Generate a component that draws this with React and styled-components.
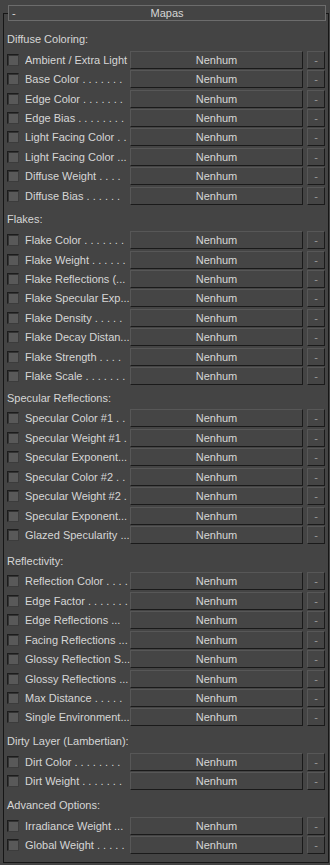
import React from 'react';
import styled, { createGlobalStyle } from 'styled-components';

const sections = [
  {
    title: 'Diffuse Coloring:',
    rows: [
      'Ambient / Extra Light',
      'Base Color . . . . . . .',
      'Edge Color . . . . . . .',
      'Edge Bias . . . . . . . .',
      'Light Facing Color . .',
      'Light Facing Color ...',
      'Diffuse Weight . . . .',
      'Diffuse Bias . . . . . .',
    ],
  },
  {
    title: 'Flakes:',
    rows: [
      'Flake Color . . . . . . .',
      'Flake Weight . . . . . .',
      'Flake Reflections (...',
      'Flake Specular Exp...',
      'Flake Density . . . . .',
      'Flake Decay Distan...',
      'Flake Strength . . . .',
      'Flake Scale . . . . . . .',
    ],
  },
  {
    title: 'Specular Reflections:',
    space: -2,
    rows: [
      'Specular Color #1 . .',
      'Specular Weight #1 .',
      'Specular Exponent...',
      'Specular Color #2 . .',
      'Specular Weight #2 .',
      'Specular Exponent...',
      'Glazed Specularity ...',
    ],
  },
  {
    title: 'Reflectivity:',
    space: 2,
    rows: [
      'Reflection Color . . . .',
      'Edge Factor . . . . . . .',
      'Edge Reflections ...',
      'Facing Reflections ...',
      'Glossy Reflection S...',
      'Glossy Reflections ...',
      'Max Distance . . . . .',
      'Single Environment...',
    ],
  },
  {
    title: 'Dirty Layer (Lambertian):',
    rows: ['Dirt Color . . . . . . . .', 'Dirt Weight . . . . . . .'],
  },
  {
    title: 'Advanced Options:',
    rows: ['Irradiance Weight ...', 'Global Weight . . . . .'],
  },
];

const GlobalStyle = createGlobalStyle`
  html, body {
    margin: 0;
    background: #444444;
  }
  body {
    font-family: "Liberation Sans", Arial, sans-serif;
    font-size: 11px;
    color: #d6d6d6;
  }
`;

const Page = styled.div`
  width: 330px;
  height: 865px;
  padding: 5px 0 0 3px;
  box-sizing: border-box;
  background: #444444;
  overflow: hidden;
`;

const Rollout = styled.div`
  width: 326px;
  margin-top: 8px;
  box-sizing: border-box;
  border: 1px solid #161616;
  padding: 0 3px 7px 3px;
`;

const Header = styled.div`
  position: relative;
  margin: -9px -1px 4px 1px;
  height: 16px;
  box-sizing: border-box;
  border: 1px solid #6c6c6c;
  background: #444444;
  display: flex;
  align-items: center;
  padding: 0 3px;
  line-height: 14px;
`;

const Collapse = styled.span`
  width: 10px;
`;

const HeaderTitle = styled.span`
  flex: 1;
  text-align: center;
  margin-right: 10px;
`;

/* space nudges the top padding, the heading keeps its 14px line */
const SectionTitle = styled.div`
  box-sizing: border-box;
  padding: ${p => 7 + (p.space || 0)}px 0 4px;
  line-height: 14px;
`;

const Row = styled.div`
  height: 19.43px;
  display: flex;
  align-items: center;
`;

const Check = styled.span`
  width: 12px;
  height: 12px;
  box-sizing: border-box;
  border: 1px solid;
  border-color: #1c1c1c #3c3c3c #3c3c3c #1c1c1c;
  box-shadow: inset 1px 1px 0 #333333;
  background: #595959;
  flex: none;
`;

const Label = styled.span`
  width: 105px;
  margin-left: 6px;
  white-space: nowrap;
  overflow: hidden;
  line-height: 14px;
  flex: none;
`;

const MapButton = styled.div`
  width: ${p => p.w}px;
  height: 18px;
  box-sizing: border-box;
  margin-left: ${p => p.gap || 0}px;
  border: 1px solid;
  border-color: #575757 #1a1a1a #1a1a1a #575757;
  background: #454545;
  display: flex;
  align-items: center;
  justify-content: center;
  line-height: 14px;
  color: ${p => (p.dim ? '#9a9a9a' : '#d6d6d6')};
  flex: none;
`;

const App = () => (
  <Page>
    <GlobalStyle />
    <Rollout>
      <Header>
        <Collapse>-</Collapse>
        <HeaderTitle>Mapas</HeaderTitle>
      </Header>
      {sections.map(section => (
        <React.Fragment key={section.title}>
          <SectionTitle space={section.space}>{section.title}</SectionTitle>
          {section.rows.map((label, i) => (
            <Row key={i}>
              <Check />
              <Label>{label}</Label>
              <MapButton w={173}>Nenhum</MapButton>
              <MapButton w={18} gap={4} dim>-</MapButton>
            </Row>
          ))}
        </React.Fragment>
      ))}
    </Rollout>
  </Page>
);

export default App;
